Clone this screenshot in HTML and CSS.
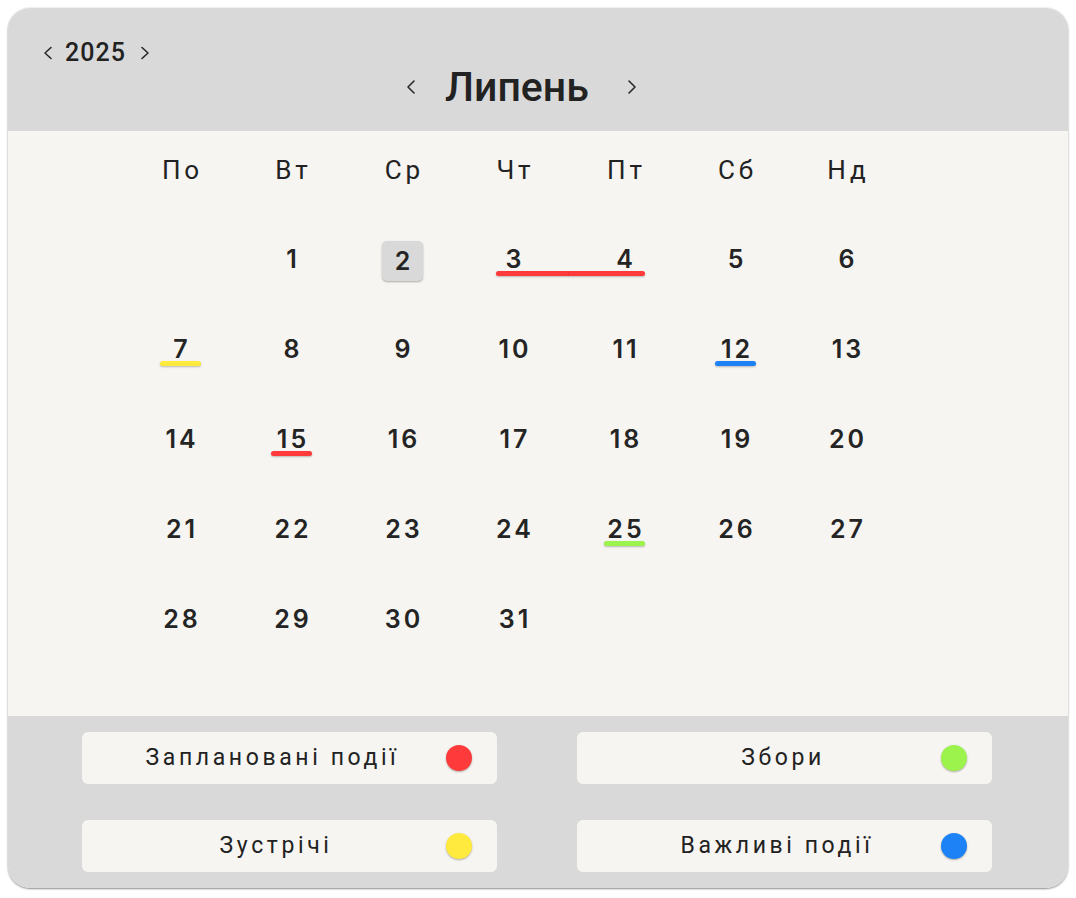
FILE: index.html
```html
<!DOCTYPE html>
<html lang="uk">
<head>
<meta charset="utf-8">
<title>Календар</title>
<link rel="stylesheet" href="styles.css">
</head>
<body>
<div class="card">
  <header class="head">
    <div class="year">
      <svg class="chev sm" viewBox="0 0 10 14"><path d="M8 1.5 L2 7 L8 12.5"/></svg>
      <span class="year-num">2025</span>
      <svg class="chev sm" viewBox="0 0 10 14"><path d="M2 1.5 L8 7 L2 12.5"/></svg>
    </div>
    <div class="month">
      <svg class="chev lg" viewBox="0 0 10 16"><path d="M8 2 L2 8 L8 14"/></svg>
      <span class="month-name">Липень</span>
      <svg class="chev lg" viewBox="0 0 10 16"><path d="M2 2 L8 8 L2 14"/></svg>
    </div>
  </header>
  <main class="body">
    <div class="weekdays">
      <span>По</span><span>Вт</span><span>Ср</span><span>Чт</span><span>Пт</span><span>Сб</span><span>Нд</span>
    </div>
    <div class="days">
      <div class="day"></div>
      <div class="day"><span class="num">1</span></div>
      <div class="day sel"><span class="num">2</span></div>
      <div class="day"><span class="num">3</span><span class="bar red range-start"></span></div>
      <div class="day"><span class="num">4</span><span class="bar red range-end"></span></div>
      <div class="day"><span class="num">5</span></div>
      <div class="day"><span class="num">6</span></div>

      <div class="day"><span class="num">7</span><span class="bar yellow"></span></div>
      <div class="day"><span class="num">8</span></div>
      <div class="day"><span class="num">9</span></div>
      <div class="day"><span class="num">10</span></div>
      <div class="day"><span class="num">11</span></div>
      <div class="day"><span class="num">12</span><span class="bar blue"></span></div>
      <div class="day"><span class="num">13</span></div>

      <div class="day"><span class="num">14</span></div>
      <div class="day"><span class="num">15</span><span class="bar red"></span></div>
      <div class="day"><span class="num">16</span></div>
      <div class="day"><span class="num">17</span></div>
      <div class="day"><span class="num">18</span></div>
      <div class="day"><span class="num">19</span></div>
      <div class="day"><span class="num">20</span></div>

      <div class="day"><span class="num">21</span></div>
      <div class="day"><span class="num">22</span></div>
      <div class="day"><span class="num">23</span></div>
      <div class="day"><span class="num">24</span></div>
      <div class="day"><span class="num">25</span><span class="bar green"></span></div>
      <div class="day"><span class="num">26</span></div>
      <div class="day"><span class="num">27</span></div>

      <div class="day"><span class="num">28</span></div>
      <div class="day"><span class="num">29</span></div>
      <div class="day"><span class="num">30</span></div>
      <div class="day"><span class="num">31</span></div>
    </div>
  </main>
  <footer class="legend">
    <div class="item"><span class="label l1">Заплановані події</span><span class="dot red"></span></div>
    <div class="item"><span class="label l2">Збори</span><span class="dot green"></span></div>
    <div class="item"><span class="label l3">Зустрічі</span><span class="dot yellow"></span></div>
    <div class="item"><span class="label l4">Важливі події</span><span class="dot blue"></span></div>
  </footer>
</div>
</body>
</html>
```

FILE: styles.css
```css
html, body {
  margin: 0;
  padding: 0;
  background: #ffffff;
}
body {
  padding: 8px;
  font-family: Roboto, "Liberation Sans", sans-serif;
  color: #222222;
}
.card {
  width: 1060px;
  height: 880px;
  border-radius: 22px;
  overflow: hidden;
  display: flex;
  flex-direction: column;
  box-shadow: 0 1px 2px rgba(0,0,0,0.45), 0 -1px 2px rgba(0,0,0,0.05);
}
.head {
  background: #d9d9d9;
  height: 123px;
  box-sizing: border-box;
  padding-top: 33px;
  flex: none;
}
.year {
  display: flex;
  align-items: center;
  height: 24px;
  padding-left: 35px;
}
.year-num {
  font-size: 25px;
  font-weight: 500;
  line-height: 24px;
  letter-spacing: 1px;
  margin: 0 14px 0 12px;
}
.chev {
  fill: none;
  stroke: #2a2a2a;
  stroke-width: 1.6;
  stroke-linecap: round;
  stroke-linejoin: round;
}
.chev.sm { width: 10px; height: 14px; }
.chev.lg { width: 10px; height: 16px; }
.month {
  display: flex;
  align-items: center;
  height: 44px;
  padding-left: 398px;
}
.month-name {
  font-size: 41px;
  font-weight: 500;
  line-height: 44px;
  margin: 0 38px 0 29px;
}
.body {
  background: #f6f5f1;
  height: 585px;
  flex: none;
  padding-left: 117px;
  box-sizing: border-box;
}
.weekdays {
  display: grid;
  grid-template-columns: repeat(7, 111px);
  height: 78px;
  align-items: center;
  justify-items: center;
  font-size: 26px;
  letter-spacing: 3.8px;
}
.weekdays span {
  margin-right: -3.8px;
}
.days {
  display: grid;
  grid-template-columns: repeat(7, 111px);
  grid-auto-rows: 90px;
  margin-top: 5px;
}
.day {
  display: flex;
  flex-direction: column;
  align-items: center;
  padding-top: 30px;
  box-sizing: border-box;
}
.num {
  font-family: Inter, "Noto Sans", sans-serif;
  font-weight: 600;
  font-size: 25px;
  line-height: 30px;
  letter-spacing: 3px;
  text-indent: 3px;
  color: #242424;
}
.day.sel .num {
  width: 41px;
  height: 40px;
  line-height: 40px;
  margin-top: -3px;
  text-align: center;
  background: #d9d9d9;
  border-radius: 5px;
  box-shadow: 0 1px 2px rgba(0,0,0,0.3);
  text-indent: 0;
  letter-spacing: 0;
}
.bar {
  display: block;
  width: 41px;
  height: 5px;
  margin-top: -3px;
  border-radius: 3px;
  box-shadow: 0 1px 2px rgba(0,0,0,0.25);
}
.bar.range-start {
  align-self: stretch;
  width: auto;
  margin-left: 38px;
  border-radius: 3px 0 0 3px;
}
.bar.range-end {
  align-self: stretch;
  width: auto;
  margin-right: 35px;
  border-radius: 0 3px 3px 0;
}
.red { background: #ff3a3a; }
.yellow { background: #ffea3d; }
.blue { background: #1c82f5; }
.green { background: #9bf34c; }
.legend {
  background: #d9d9d9;
  flex: 1;
  display: grid;
  grid-template-columns: 415px 415px;
  grid-auto-rows: 52px;
  column-gap: 80px;
  row-gap: 36px;
  padding: 16px 74px;
  box-sizing: border-box;
}
.item {
  background: #f6f5f1;
  border-radius: 6px;
  display: grid;
  align-items: center;
}
.label {
  grid-area: 1 / 1;
  justify-self: center;
  font-size: 23px;
  letter-spacing: 3.6px;
  line-height: 30px;
  margin-top: -1px;
  color: #222222;
}
.label.l1 { padding-right: 34px; }
.label.l2 { padding-right: 3px; }
.label.l3 { padding-right: 27px; }
.label.l4 { padding-right: 15px; }
.dot {
  grid-area: 1 / 1;
  justify-self: end;
  width: 26px;
  height: 26px;
  border-radius: 50%;
  margin-right: 25px;
  box-shadow: 0 1px 2px rgba(0,0,0,0.3);
}
```
